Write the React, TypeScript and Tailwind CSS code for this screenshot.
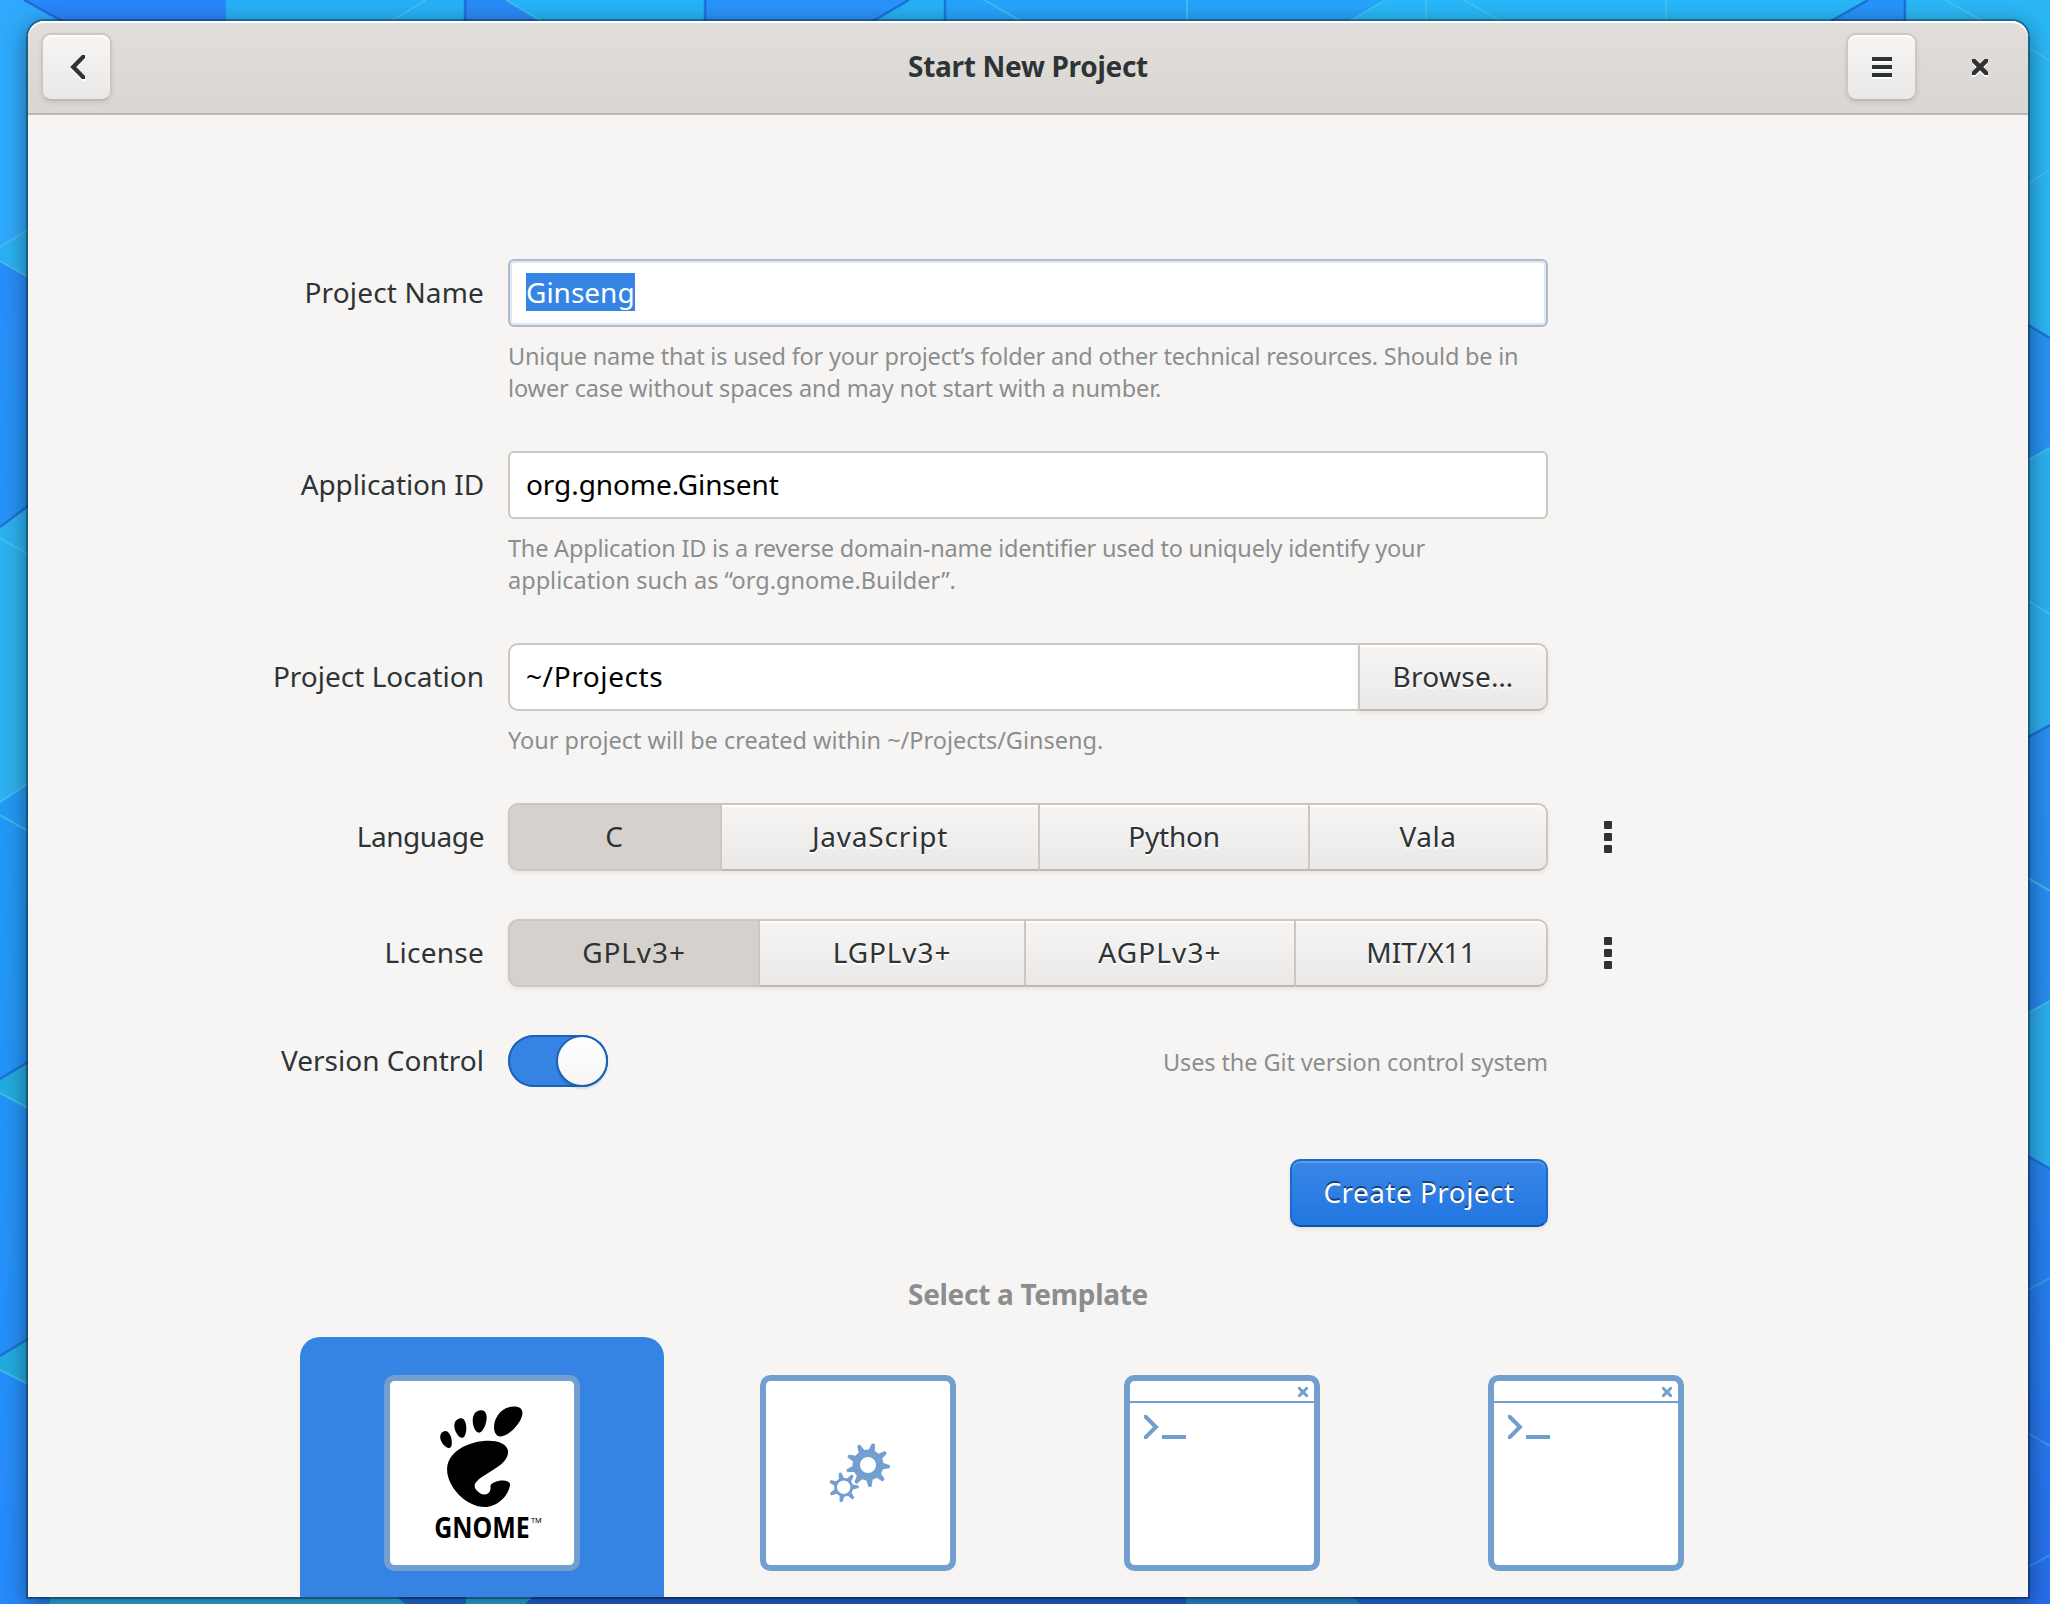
import React from 'react';
import clsx from 'clsx';

const BLUE = '#729fcf';

function Wallpaper() {
  const light = { stroke: '#4cc4f0', strokeWidth: 2, strokeOpacity: 0.7 };
  const dark = { stroke: '#1a57c8', strokeWidth: 2.5, strokeOpacity: 0.65 };
  return (
    <svg className="absolute inset-0" width="2050" height="1604" viewBox="0 0 2050 1604" aria-hidden="true">
      <defs>
        <linearGradient id="left" x1="0" y1="0" x2="0" y2="1">
          <stop offset="0" stopColor="#2b88fb" />
          <stop offset="0.5" stopColor="#229af4" />
          <stop offset="1" stopColor="#268afb" />
        </linearGradient>
        <linearGradient id="right" x1="0" y1="0" x2="0" y2="1">
          <stop offset="0" stopColor="#2a96f3" />
          <stop offset="0.6" stopColor="#268cee" />
          <stop offset="1" stopColor="#266eec" />
        </linearGradient>
      </defs>
      <rect width="1025" height="1604" fill="url(#left)" />
      <rect x="1025" width="1025" height="1604" fill="url(#right)" />

      <path d="M0 0H24L62 21V60H28V230L0 247Z" fill="#2fa9fb" />
      <path d="M24 0H226V40H62V21Z" fill="#2a86fb" />
      <path d="M226 0H465V40H226Z" fill="#27b0f6" />
      <path d="M465 0H506L541 21V40H465Z" fill="#2a8af5" />
      <path d="M506 0H705V40H541V21Z" fill="#24b4f7" />
      <path d="M705 0H909L873 21V40H705Z" fill="#2a93fa" />
      <path d="M909 0H945V40H873V21Z" fill="#27b0f6" />
      <path d="M945 0H1385L1350 21V40H945Z" fill="#27a3fb" />
      <path d="M1385 0H1868L1831 21V40H1350V21Z" fill="#28b7f8" />
      <path d="M1868 0H1905V40H1831V21Z" fill="#2793f8" />
      <path d="M1905 0H2050V338L2020 322V40H1905Z" fill="#2bb6f5" />

      <path d="M0 247L28 230V277L0 261Z" fill="#2bb1f0" />
      <path d="M0 527L30 505V783L0 802Z" fill="#2db1f0" />
      <path d="M0 1079L30 1061V1109L0 1093Z" fill="#23abe0" />
      <path d="M0 1356L30 1337V1385L0 1370Z" fill="#23abe0" />
      <path d="M2050 448L2020 465V741L2050 725Z" fill="#2bb0ef" />
      <path d="M2050 1001L2020 1018V1152L2050 1169Z" fill="#2bacee" />

      <path d="M50 1590H391L405 1604H50Z" fill="#2bb6ee" />
      <path d="M391 1590H466V1604H405Z" fill="#2672dc" />
      <path d="M466 1590H540L525 1604H466Z" fill="#2bb0e8" />
      <path d="M540 1590H1186V1604H525Z" fill="#2268dc" />
      <path d="M1186 1590H1345L1360 1604H1186Z" fill="#2a96e0" />

      <g {...dark}>
        <path d="M24 0L62 21M909 0L873 21M945 0V21M1868 0L1831 21M1905 0V21M705 0V21M465 0V21" fill="none" />
        <path d="M0 527L28 506M0 1079L28 1062M0 1356L28 1339M2028 325L2050 338M2028 737L2050 725M2028 1156L2050 1169" fill="none" />
      </g>
      <g {...light}>
        <path d="M506 0L541 21M984 0L1021 21M1187 0V21M1385 0L1350 21M1426 0V21M1464 0L1501 21M1666 0V21M1945 0L1983 21M426 0L391 21" fill="none" />
        <path d="M0 247L28 230M0 261L28 277M0 538L28 554M0 802L28 784M0 815L28 831M0 1093L28 1108M0 1370L28 1384" fill="none" />
        <path d="M2029 48L2050 61M2029 183L2050 170M2028 460L2050 448M2028 601L2050 614M2028 878L2050 891M2028 1013L2050 1001" fill="none" />
        <path d="M2028 1290L2050 1278M2028 1433L2050 1446M2028 1567L2050 1555" fill="none" strokeOpacity="0.4" />
      </g>
    </svg>
  );
}

const raised =
  'border-2 border-[#cdc7c2] border-b-[#bfb8b1] bg-linear-to-b from-[#f6f5f4] to-[#ebe9e7] shadow-[inset_0_2px_#ffffff,0_2px_5px_rgba(0,0,0,0.08)] [text-shadow:0_2px_#ffffff]';

function HeaderButton({ label, children }: { label: string; children: React.ReactNode }) {
  return (
    <button aria-label={label} className={clsx('flex h-[68px] w-[71px] items-center justify-center rounded-[10px]', raised)}>
      {children}
    </button>
  );
}

function Header() {
  return (
    <header className="grid h-[94px] shrink-0 grid-cols-[1fr_auto_1fr] items-center rounded-t-[16px] border-b-2 border-[#bfb8b1] bg-linear-to-b from-[#e1dedb] to-[#dad6d2] px-[13px] shadow-[inset_0_2px_#ffffff]">
      <HeaderButton label="Back">
        <svg width="32" height="32" viewBox="0 0 32 32">
          <path d="M24 6V3.9H21L9.2 16L21 28H24V25L15.3 16L24 7Z" transform="translate(0 2)" fill="#fff" />
          <path d="M24 4H21L9.2 16L21 28H24V25L15.3 16L24 7Z" fill="#2e3436" />
        </svg>
      </HeaderButton>
      <h1 className="pb-[2px] text-[28px] leading-[40px] font-bold tracking-[-0.3px]">Start New Project</h1>
      <div className="flex items-center justify-end gap-[47px]">
        <HeaderButton label="Menu">
          <svg width="32" height="32" viewBox="0 0 32 32">
            <path d="M6 8H26V12H6ZM6 16H26V20H6ZM6 24H26V28H6Z" fill="#fff" />
            <path d="M6 6H26V10H6ZM6 14H26V18H6ZM6 22H26V26H6Z" fill="#2e3436" />
          </svg>
        </HeaderButton>
        <svg width="32" height="32" viewBox="0 0 32 32" aria-label="Close" className="mr-[19px]">
          <path d="M8 10H11L16 15L21 10H24V13L19 18L24 23V26H21L16 21L11 26H8V23L13 18L8 13Z" fill="#fff" fillOpacity="0.8" />
          <path d="M8 8H11.2L16 12.8L20.8 8H24V11.2L19.2 16L24 20.8V24H20.8L16 19.2L11.2 24H8V20.8L12.8 16L8 11.2Z" fill="#2e3436" />
        </svg>
      </div>
    </header>
  );
}

function Row({ label, labelClass, height = 'h-[68px]', hint, more, children }: {
  label: string;
  labelClass?: string;
  height?: string;
  hint?: React.ReactNode;
  more?: boolean;
  children: React.ReactNode;
}) {
  return (
    <div className="grid grid-cols-[456px_1040px_1fr] gap-x-[24px]">
      <div className={clsx('flex items-center justify-end pb-[2px]', height, labelClass)}>{label}</div>
      <div className="flex flex-col">
        {children}
        {hint && <p className="mt-[13px] text-[23.5px] leading-[32px] tracking-[-0.21px] whitespace-nowrap text-[#8b8e8f]">{hint}</p>}
      </div>
      {more && (
        <button aria-label={'More ' + label.toLowerCase() + ' options'} className="ml-[32px] flex w-2 flex-col justify-center gap-1">
          <span className="h-2 w-2 rounded-[1px] bg-[#2e3436]" />
          <span className="h-2 w-2 rounded-[1px] bg-[#2e3436]" />
          <span className="h-2 w-2 rounded-[1px] bg-[#2e3436]" />
        </button>
      )}
    </div>
  );
}

const entry = 'flex h-[68px] items-center border-2 bg-white px-[16px] pb-[2px] text-black';

function Segments({ items }: { items: { text: string; className: string }[] }) {
  return (
    <div className="flex h-[68px] rounded-[10px] shadow-[0_2px_5px_rgba(0,0,0,0.07)]">
      {items.map((item, i) => (
        <button
          key={item.text}
          className={clsx(
            'flex items-center justify-center border-y-2 border-r-2 border-[#cdc7c2] pb-[2px] first:rounded-l-[10px] first:border-l-2 last:rounded-r-[10px]',
            i === 0
              ? 'bg-[#d6d1cd]'
              : 'border-b-[#bfb8b1] bg-linear-to-b from-[#f6f5f4] to-[#ebe9e7] shadow-[inset_0_2px_#ffffff] [text-shadow:0_2px_#ffffff]',
            item.className,
          )}
        >
          {item.text}
        </button>
      ))}
    </div>
  );
}

function gear(cx: number, cy: number, teeth: number, outer: number, body: number, hole: number, start: number) {
  const step = 360 / teeth;
  const at = (r: number, deg: number) => {
    const a = (deg * Math.PI) / 180;
    return `${(cx + r * Math.cos(a)).toFixed(2)} ${(cy + r * Math.sin(a)).toFixed(2)}`;
  };
  let d = '';
  for (let i = 0; i < teeth; i++) {
    const a = start + i * step;
    d += `${i ? 'L' : 'M'}${at(body, a - step * 0.29)}L${at(outer, a - step * 0.1)}L${at(outer, a + step * 0.1)}L${at(body, a + step * 0.29)}A${body} ${body} 0 0 1 ${at(body, a + step * 0.71)}`;
  }
  return `${d}ZM${cx - hole} ${cy}a${hole} ${hole} 0 1 0 ${2 * hole} 0a${hole} ${hole} 0 1 0 ${-2 * hole} 0Z`;
}

function Frame({ children, label }: { children: React.ReactNode; label: string }) {
  return (
    <svg width="196" height="196" viewBox="0 0 196 196" role="img" aria-label={label}>
      <rect x="3" y="3" width="190" height="190" rx="7.5" fill="#fff" stroke={BLUE} strokeWidth="6" />
      {children}
    </svg>
  );
}

function GnomeArt() {
  return (
    <Frame label="GNOME application">
      <path
        transform="translate(56.2 31.6) scale(0.855 0.85)"
        d="M86.068 0C61.466 0 56.851 35.041 70.691 35.041C84.529 35.041 110.671 0 86.068 0ZM45.217 30.699C52.586 31.149 60.671 2.577 46.821 4.374C32.976 6.171 37.845 30.249 45.217 30.699ZM11.445 48.453C16.686 46.146 12.12 23.581 3.208 29.735C-5.7 35.89 6.204 50.759 11.445 48.453ZM26.212 36.642C32.451 35.37 32.793 9.778 21.667 14.369C10.539 18.961 19.978 37.916 26.212 36.642ZM58.791 93.913C59.898 102.367 52.589 106.542 45.431 101.092C22.644 83.743 83.16 75.088 79.171 51.386C75.86 31.712 15.495 37.769 8.621 68.553C3.968 89.374 27.774 118.26 52.614 118.26C64.834 118.26 78.929 107.226 81.566 93.248C83.58 82.589 57.867 86.86 58.791 93.913Z"
        fill="#000"
      />
      <text transform="translate(50.2 163.3) scale(0.875 1)" fontSize="28.5" fontWeight="700" fill="#000">GNOME</text>
      <text x="147" y="147.5" fontSize="7.4" fill="#000">TM</text>
    </Frame>
  );
}

function GearsArt() {
  return (
    <Frame label="Shared library">
      <path d={gear(108, 90, 9, 22, 15.5, 8, 4.5)} fill={BLUE} fillRule="evenodd" />
      <path d={gear(83.7, 112.3, 7, 15, 9.5, 6.7, -2)} fill={BLUE} fillRule="evenodd" />
    </Frame>
  );
}

function TerminalArt({ label }: { label: string }) {
  return (
    <Frame label={label}>
      <path d="M6 26H190V28H6Z" fill={BLUE} />
      <path d="M174 12H176L179 15L182 12H184V14L181.2 17L184 20V22H182L179 19.2L176 22H174V20L176.8 17L174 14Z" fill={BLUE} />
      <path d="M20 40H22.8L34.8 52L22.8 64H20V61L29 52L20 43Z" fill={BLUE} />
      <path d="M38 60H62V64H38Z" fill={BLUE} />
    </Frame>
  );
}

function Card({ selected, children }: { selected?: boolean; children: React.ReactNode }) {
  return (
    <div className={clsx('flex h-[280px] w-[364px] items-start justify-center rounded-[20px] pt-[38px]', selected && 'mr-[12px] bg-[#3584e4]')}>
      {children}
    </div>
  );
}

export default function App() {
  return (
    <div className="relative h-[1604px] w-[2050px] overflow-hidden font-['Noto_Sans','Open_Sans',sans-serif] text-[28px] leading-[40px] text-[#2e3436]">
      <Wallpaper />
      <div className="relative mt-[21px] ml-[28px] flex h-[1576px] w-[2000px] flex-col overflow-hidden rounded-t-[16px] bg-[#f6f5f4] shadow-[0_0_0_2px_rgba(0,0,0,0.3),0_6px_22px_2px_rgba(0,0,0,0.42)]">
        <Header />
        <main className="flex shrink-0 flex-col pt-[144px]">
          <div className="flex flex-col gap-[47px]">
            <Row
              label="Project Name"
              labelClass="tracking-[0.15px]"
              hint={<>Unique name that is used for your project’s folder and other technical resources. Should be in<br /><span className="tracking-[-0.12px]">lower case without spaces and may not start with a number.</span></>}
            >
              <div className={clsx(entry, 'rounded-[6px] border-[#b1bbcb] shadow-[inset_0_0_0_2px_#dde8f7]')}>
                <span className="bg-[#3584e4] leading-[38px] text-white">Ginseng</span>
              </div>
            </Row>
            <Row
              label="Application ID"
              labelClass="tracking-[-0.1px]"
              hint={<>The Application ID is a reverse domain-name identifier used to uniquely identify your<br /><span className="tracking-[0.01px]">application such as “org.gnome.Builder”.</span></>}
            >
              <div className={clsx(entry, 'rounded-[6px] border-[#cdc7c2] tracking-[-0.08px]')}>org.gnome.Ginsent</div>
            </Row>
            <Row label="Project Location" hint={<span className="tracking-[-0.02px]">Your project will be created within ~/Projects/Ginseng.</span>}>
              <div className="flex">
                <div className={clsx(entry, 'w-[850px] rounded-l-[10px] border-r-0 border-[#cdc7c2] tracking-[0.6px]')}>~/Projects</div>
                <button className={clsx('flex h-[68px] w-[190px] items-center justify-center rounded-r-[10px] pb-[2px] tracking-[0.3px]', raised)}>Browse…</button>
              </div>
            </Row>
          </div>
          <div className="mt-[47px] flex flex-col gap-[48px]">
            <Row label="Language" labelClass="tracking-[-0.45px]" more>
              <Segments
                items={[
                  { text: 'C', className: 'w-[214px] pr-[2px]' },
                  { text: 'JavaScript', className: 'w-[318px] tracking-[0.8px]' },
                  { text: 'Python', className: 'w-[270px] tracking-[-0.2px]' },
                  { text: 'Vala', className: 'w-[238px] tracking-[0.5px]' },
                ]}
              />
            </Row>
            <Row label="License" labelClass="tracking-[0.25px]" more>
              <Segments
                items={[
                  { text: 'GPLv3+', className: 'w-[252px] tracking-[0.9px]' },
                  { text: 'LGPLv3+', className: 'w-[266px] tracking-[0.9px]' },
                  { text: 'AGPLv3+', className: 'w-[270px] tracking-[1.1px]' },
                  { text: 'MIT/X11', className: 'w-[252px]' },
                ]}
              />
            </Row>
            <Row label="Version Control" height="h-[52px]">
              <div className="flex h-[52px] items-center justify-between">
                <div role="switch" aria-checked="true" className="flex h-[52px] w-[100px] justify-end rounded-full bg-[#3584e4] shadow-[inset_0_0_0_2px_#1b63b8]">
                  <span className="h-[52px] w-[52px] rounded-full border-2 border-[#1b63b8] bg-linear-to-b from-white to-[#f6f5f4] shadow-[0_2px_2px_rgba(0,0,0,0.12)]" />
                </div>
                <span className="pt-[1px] text-[23.5px] leading-[32px] tracking-[-0.1px] text-[#8b8e8f]">Uses the Git version control system</span>
              </div>
            </Row>
          </div>
          <div className="mt-[72px] flex w-[1520px] justify-end">
            <button className="flex h-[68px] w-[258px] items-center justify-center rounded-[10px] border-2 border-[#1b6acb] border-b-[#15539e] bg-linear-to-b from-[#3986e6] to-[#2176e1] pb-[2px] tracking-[0.45px] text-white shadow-[inset_0_2px_#5c9ae9,0_2px_5px_rgba(0,0,0,0.08)] [text-shadow:0_-2px_rgba(0,0,0,0.5)]">
              Create Project
            </button>
          </div>
          <h2 className="mt-[47px] text-center text-[28px] leading-[40px] font-bold tracking-[-0.3px] text-[#8b8e8f]">Select a Template</h2>
          <div className="mt-[23px] ml-[272px] flex">
            <Card selected><GnomeArt /></Card>
            <Card><GearsArt /></Card>
            <Card><TerminalArt label="Command line tool" /></Card>
            <Card><TerminalArt label="Empty project" /></Card>
          </div>
        </main>
      </div>
    </div>
  );
}
